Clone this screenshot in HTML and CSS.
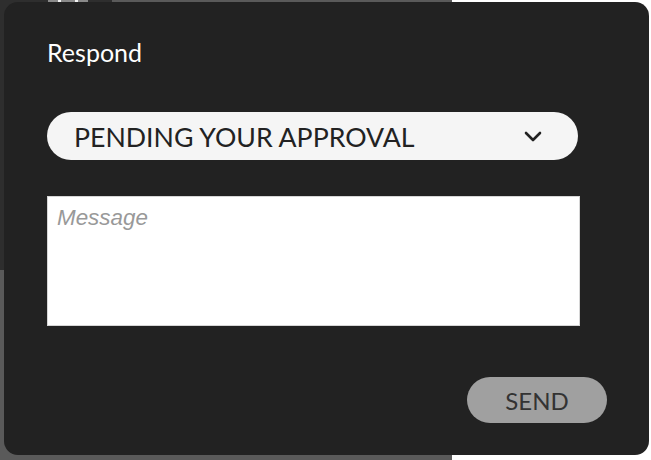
FILE: index.html
```html
<!DOCTYPE html>
<html lang="en">
<head>
    <meta charset="UTF-8">
    <meta name="viewport" content="width=device-width, initial-scale=1.0">
    <title>Respond</title>
    <link rel="stylesheet" href="styles.css">
</head>
<body>
    <!-- page behind the dialog -->
    <div class="page">
        <div class="page-main">
            <div class="sidebar">
                <div class="sidebar-tile"><span class="tile-mark"></span></div>
            </div>
        </div>
    </div>

    <div class="modal">
        <h2 class="modal-title">Respond</h2>

        <div class="status-select">
            <span class="status-text">PENDING YOUR APPROVAL</span>
            <svg class="chevron" width="18" height="11" viewBox="0 0 18 11">
                <polyline points="2,2 9,9 16,2" fill="none" stroke="#222" stroke-width="2.6" stroke-linecap="round" stroke-linejoin="round"/>
            </svg>
        </div>

        <textarea class="message" placeholder="Message"></textarea>

        <div class="actions">
            <button type="button" class="send-btn">SEND</button>
        </div>
    </div>
</body>
</html>
```

FILE: styles.css
```css
body {
    margin: 0;
    background-color: #ffffff;
    font-family: Lato, "Open Sans", sans-serif;
    overflow: hidden;
}

.page {
    height: 460px;
}

.page-main {
    width: 452px;
    height: 100%;
    background-color: #5a5a5a;
}

.sidebar {
    width: 112px;
    height: 270px;
    background-color: #2e2e2e;
}

.sidebar-tile {
    margin-left: 48px;
    width: 40px;
    height: 20px;
    background-color: #8a8a8a;
    display: flex;
    justify-content: center;
}

.tile-mark {
    width: 14px;
    height: 6px;
    border-left: 3px solid #f2f2f2;
    border-right: 3px solid #f2f2f2;
}

.modal {
    position: absolute;
    left: 4px;
    top: 2px;
    width: 645px;
    height: 453px;
    box-sizing: border-box;
    padding: 35px 42px 0 43px;
    background-color: #222222;
    border-radius: 14px;
    display: flex;
    flex-direction: column;
}

.modal-title {
    margin: 0;
    font-size: 25px;
    font-weight: normal;
    line-height: 30px;
    color: #ffffff;
}

.status-select {
    margin-top: 45px;
    width: 531px;
    height: 48px;
    box-sizing: border-box;
    padding: 2px 36px 0 27px;
    background-color: #f5f5f5;
    border-radius: 24px;
    display: flex;
    align-items: center;
    justify-content: space-between;
}

.status-text {
    font-size: 26.7px;
    color: #222222;
}

.chevron {
    margin-top: -2px;
}

.message {
    margin-top: 36px;
    width: 533px;
    height: 130px;
    box-sizing: border-box;
    padding: 8px 9px;
    border: 1px solid #d6d6d6;
    background: #ffffff;
    font-family: "Liberation Sans", Arial, sans-serif;
    font-size: 22.4px;
    resize: none;
    outline: none;
}

.message::placeholder {
    color: #999999;
    font-style: italic;
}

.actions {
    margin-top: 51px;
    display: flex;
    justify-content: flex-end;
}

.send-btn {
    width: 140px;
    height: 46px;
    border: none;
    border-radius: 23px;
    background-color: #a0a0a0;
    color: #333333;
    font-family: Lato, "Open Sans", sans-serif;
    font-size: 24px;
    padding: 0;
}
```
